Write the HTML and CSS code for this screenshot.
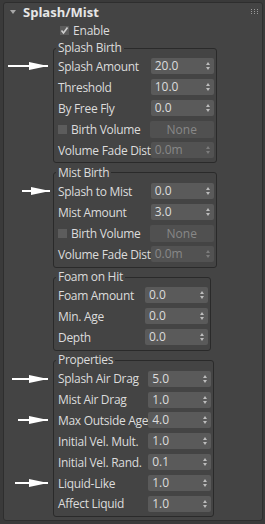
FILE: index.html
```html
<!DOCTYPE html>
<html lang="en">
<head>
    <meta charset="UTF-8">
    <meta name="viewport" content="width=device-width, initial-scale=1.0">
    <title>Splash/Mist</title>
    <link rel="stylesheet" href="styles.css">
</head>
<body>
    <div class="rollout">
        <!-- Cabeçalho -->
        <div class="rollout-head">
            <span class="caret"></span>
            <span class="rollout-title">Splash/Mist</span>
            <svg class="grip" width="7" height="6" viewBox="0 0 7 6">
                <rect x="0" y="0" width="1" height="1"/><rect x="3" y="0" width="1" height="1"/><rect x="6" y="0" width="1" height="1"/>
                <rect x="0" y="2" width="1" height="1"/><rect x="3" y="2" width="1" height="1"/><rect x="6" y="2" width="1" height="1"/>
                <rect x="0" y="4" width="1" height="1"/><rect x="3" y="4" width="1" height="1"/><rect x="6" y="4" width="1" height="1"/>
            </svg>
        </div>

        <div class="enable">
            <span class="box checked">
                <svg width="9" height="9" viewBox="0 0 9 9"><polyline points="1.5,4.5 3.5,7 7.5,1.5" /></svg>
            </span>
            Enable
        </div>

        <!-- Splash Birth -->
        <fieldset class="group">
            <legend>Splash Birth</legend>
            <div class="row marked arrow-a"><span class="label">Splash Amount</span><div class="spinner">20.0</div></div>
            <div class="row"><span class="label">Threshold</span><div class="spinner">10.0</div></div>
            <div class="row"><span class="label">By Free Fly</span><div class="spinner">0.0</div></div>
            <div class="row"><span class="label"><span class="box"></span>Birth Volume</span><div class="button disabled">None</div></div>
            <div class="row"><span class="label">Volume Fade Dist</span><div class="spinner disabled">0.0m</div></div>
        </fieldset>

        <!-- Mist Birth -->
        <fieldset class="group">
            <legend>Mist Birth</legend>
            <div class="row marked arrow-b"><span class="label">Splash to Mist</span><div class="spinner">0.0</div></div>
            <div class="row"><span class="label">Mist Amount</span><div class="spinner">3.0</div></div>
            <div class="row"><span class="label"><span class="box"></span>Birth Volume</span><div class="button disabled">None</div></div>
            <div class="row"><span class="label">Volume Fade Dist</span><div class="spinner disabled">0.0m</div></div>
        </fieldset>

        <!-- Foam on Hit -->
        <fieldset class="group">
            <legend>Foam on Hit</legend>
            <div class="row"><span class="label">Foam Amount</span><div class="spinner">0.0</div></div>
            <div class="row"><span class="label">Min. Age</span><div class="spinner">0.0</div></div>
            <div class="row"><span class="label">Depth</span><div class="spinner">0.0</div></div>
        </fieldset>

        <!-- Properties -->
        <fieldset class="group">
            <legend>Properties</legend>
            <div class="row marked arrow-c"><span class="label">Splash Air Drag</span><div class="spinner">5.0</div></div>
            <div class="row"><span class="label">Mist Air Drag</span><div class="spinner">1.0</div></div>
            <div class="row marked arrow-d"><span class="label">Max Outside Age</span><div class="spinner">4.0</div></div>
            <div class="row"><span class="label">Initial Vel. Mult.</span><div class="spinner">1.0</div></div>
            <div class="row"><span class="label">Initial Vel. Rand.</span><div class="spinner">0.1</div></div>
            <div class="row marked arrow-e"><span class="label">Liquid-Like</span><div class="spinner">1.0</div></div>
            <div class="row"><span class="label">Affect Liquid</span><div class="spinner">1.0</div></div>
        </fieldset>
    </div>
</body>
</html>
```

FILE: styles.css
```css
/* CSS */
body {
    margin: 0;
    background-color: #3a3a3a;
    font-family: "Open Sans", "Noto Sans", sans-serif;
    font-size: 11px;
    color: #dcdcdc;
}

.rollout {
    margin: 2px 2px 0 3px;
    height: 519px;
    box-sizing: border-box;
    background-color: #444444;
    border: 1px solid #2e2e2e;
    border-radius: 3px;
}

.rollout-head {
    display: flex;
    align-items: center;
    height: 16px;
    margin-top: 1px;
    padding-left: 6px;
}

.caret {
    width: 0;
    height: 0;
    border-top: 4px solid #a8a8a8;
    border-left: 3px solid transparent;
    border-right: 3px solid transparent;
    margin-right: 7px;
}

.rollout-title {
    font-weight: bold;
    font-size: 13px;
    color: #e6e6e6;
}

.grip {
    margin-left: auto;
    margin-right: 4px;
    fill: #9a9a9a;
}

.enable {
    display: flex;
    align-items: center;
    height: 16px;
    margin: 2px 0 2px 56px;
    font-size: 12px;
    letter-spacing: -0.2px;
}

.box {
    display: inline-flex;
    align-items: center;
    justify-content: center;
    width: 9px;
    height: 9px;
    background-color: #5c5c5c;
    margin-right: 4px;
}

.box svg polyline {
    fill: none;
    stroke: #cfcfcf;
    stroke-width: 1.6;
}

.group {
    box-sizing: border-box;
    width: 158px;
    margin: 0 0 0 49px;
    padding: 0 2px 2px 4px;
    border: 1px solid #2a2a2a;
    border-radius: 3px;
}

.group + .group {
    margin-top: 1.5px;
}

.group legend {
    padding: 0 2px;
    margin-left: -2px;
    font-size: 12px;
    line-height: 16px;
    letter-spacing: -0.3px;
}

.row {
    position: relative;
    display: flex;
    align-items: center;
    height: 20.9px;
    font-size: 12px;
    letter-spacing: -0.3px;
}

.label {
    display: flex;
    align-items: center;
    flex: 1;
    white-space: nowrap;
}

.spinner {
    position: relative;
    box-sizing: border-box;
    width: 63px;
    height: 16px;
    line-height: 16px;
    padding-left: 4px;
    letter-spacing: 0;
    background-color: #5a5a5a;
    border-radius: 2px;
}

.spinner::before,
.spinner::after {
    content: "";
    position: absolute;
    right: 4px;
    width: 0;
    height: 0;
    border-left: 2.5px solid transparent;
    border-right: 2.5px solid transparent;
}

.spinner::before {
    top: 4px;
    border-bottom: 3px solid #bdbdbd;
}

.spinner::after {
    top: 9px;
    border-top: 3px solid #bdbdbd;
}

.button {
    box-sizing: border-box;
    width: 64px;
    height: 17px;
    line-height: 17px;
    text-align: center;
    letter-spacing: 0;
    background-color: #505050;
    border-radius: 2px;
}

.disabled {
    color: #888888;
}

.spinner.disabled {
    background-color: #525252;
}

.spinner.disabled::before {
    border-bottom-color: #7c7c7c;
}

.spinner.disabled::after {
    border-top-color: #7c7c7c;
}

/* Setas de anotação */
.marked::before {
    content: "";
    position: absolute;
    top: 50%;
    margin-top: -1px;
    height: 2px;
    background-color: #ffffff;
    right: calc(100% + 10px);
}

.marked::after {
    content: "";
    position: absolute;
    top: 50%;
    margin-top: -4px;
    right: calc(100% + 10px);
    width: 0;
    height: 0;
    border-top: 4px solid transparent;
    border-bottom: 4px solid transparent;
    border-left: 19px solid #ffffff;
}

.arrow-a::before { width: 40px; }
.arrow-b::before { width: 28px; right: calc(100% + 8px); }
.arrow-b::after { right: calc(100% + 8px); }
.arrow-c::before { width: 36px; }
.arrow-d::before { width: 30px; }
.arrow-e::before { width: 33px; }
```
